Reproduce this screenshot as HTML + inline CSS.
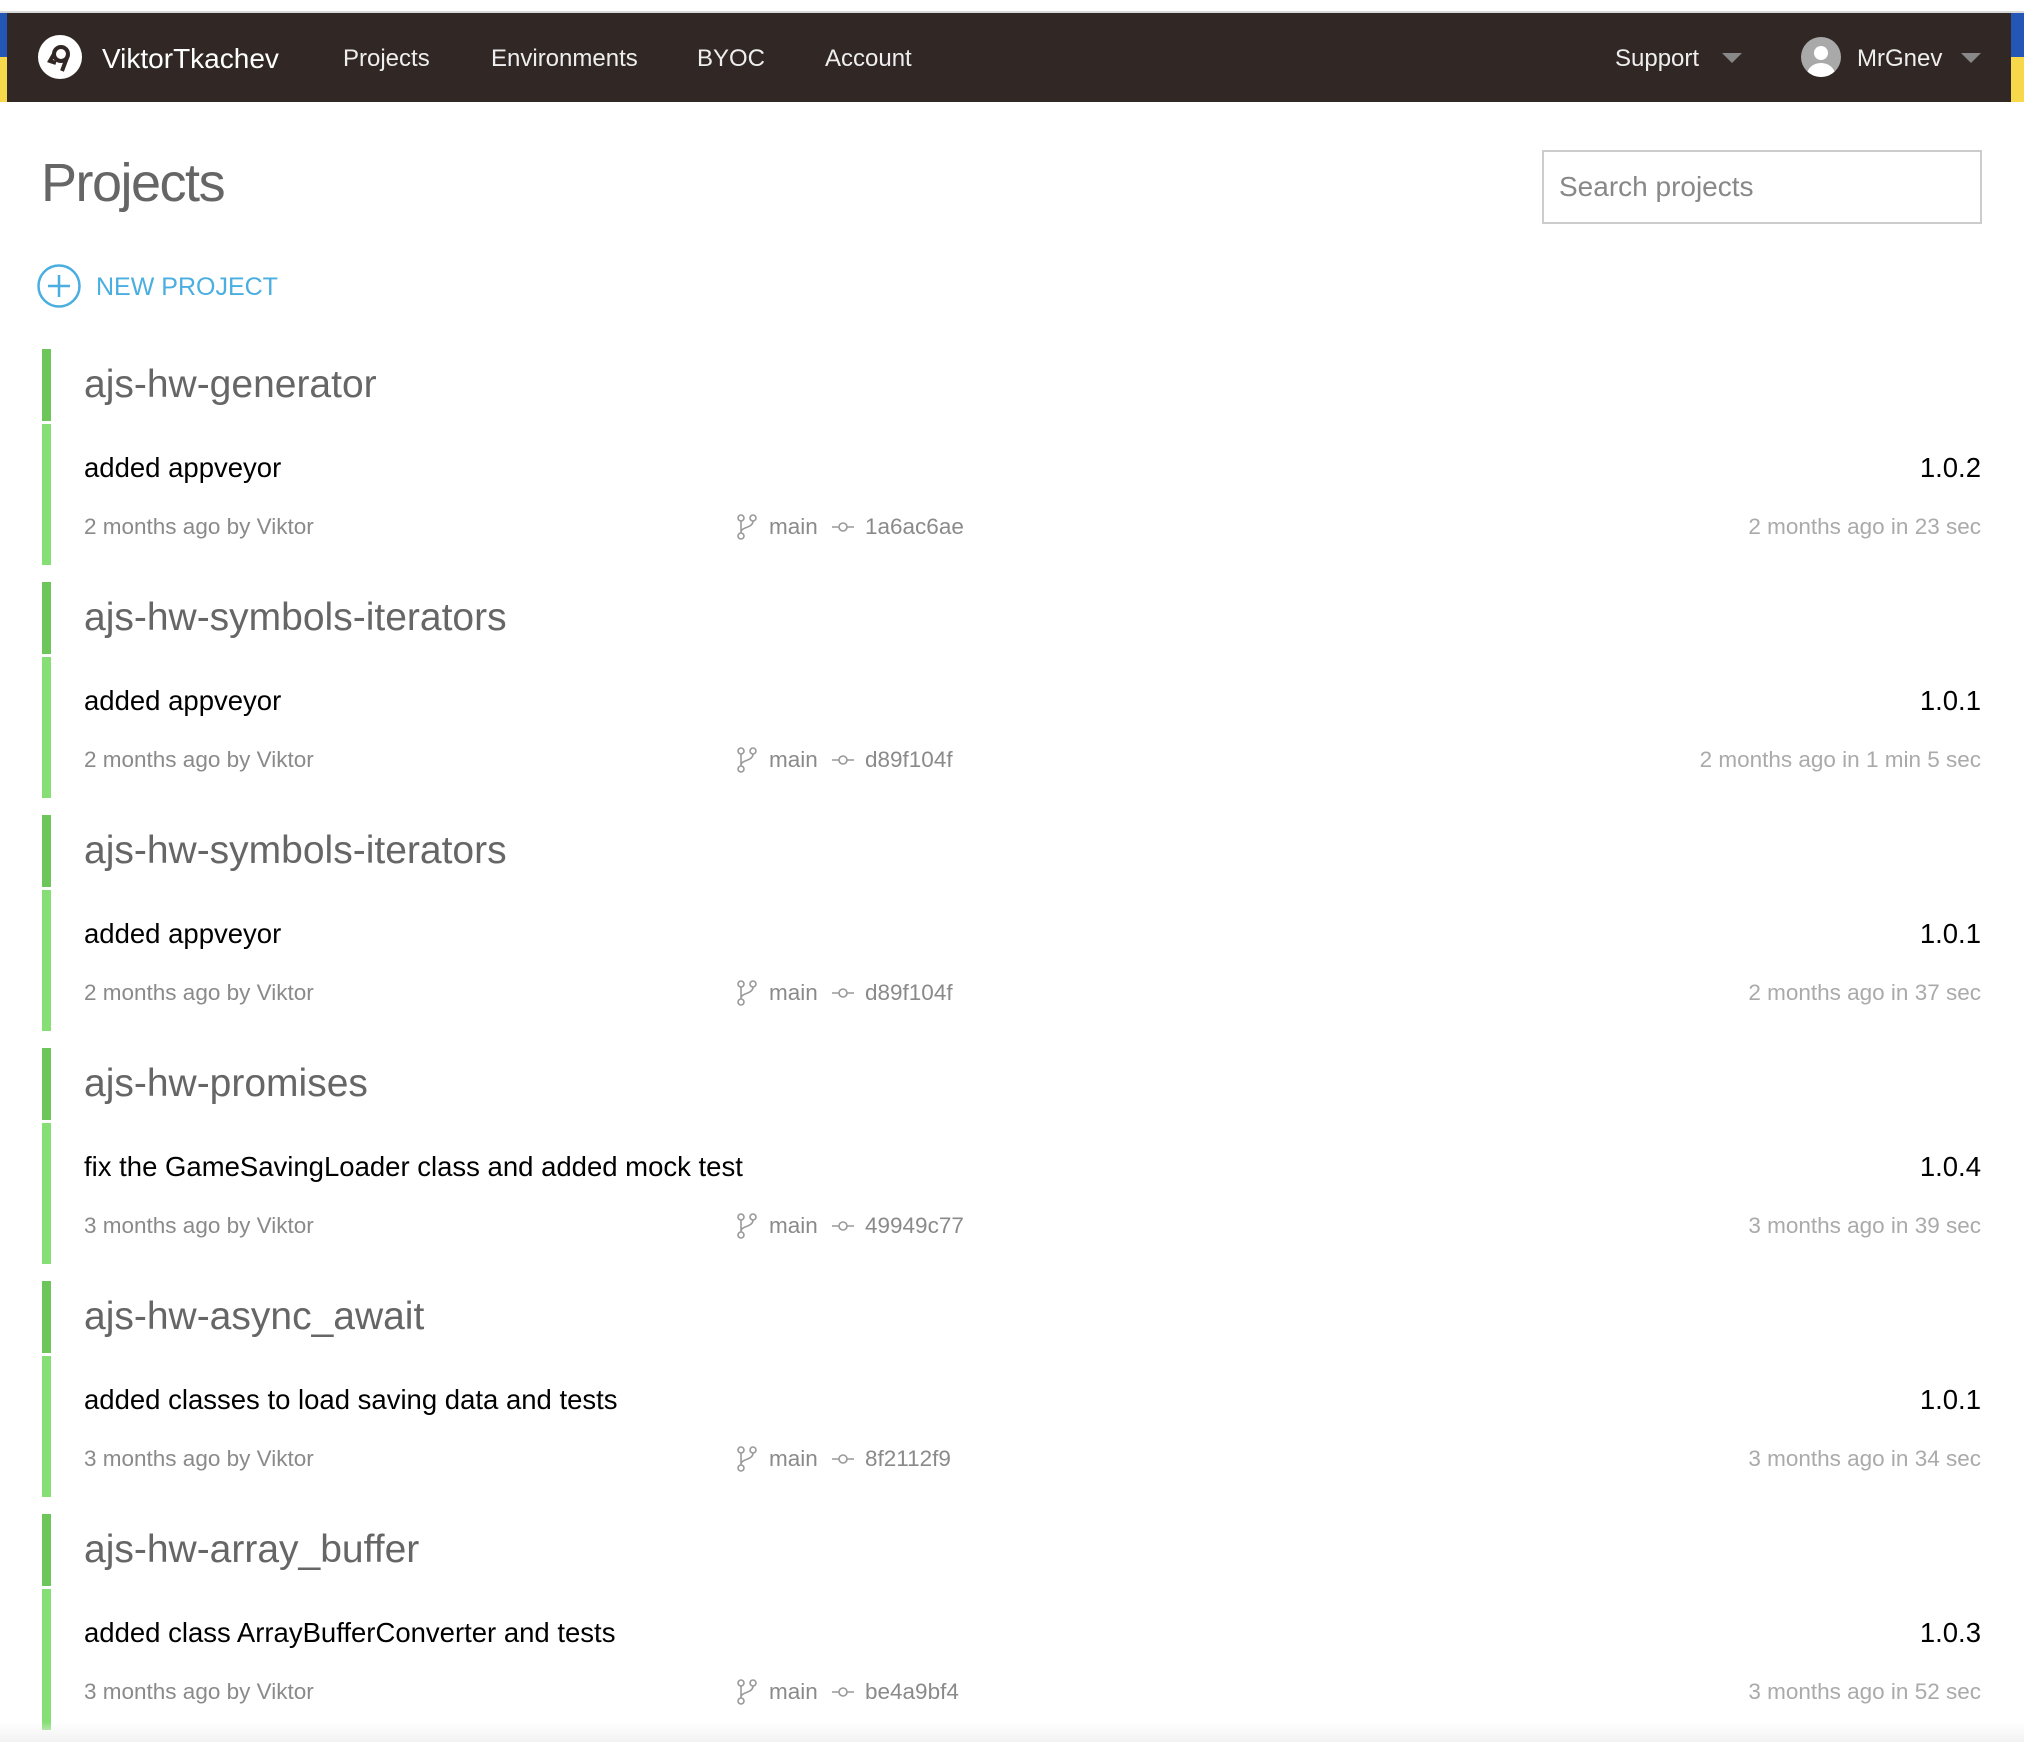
<!DOCTYPE html>
<html><head><meta charset="utf-8"><style>
*{margin:0;padding:0;box-sizing:border-box}
body{width:2024px;height:1742px;background:#fff;font-family:"Liberation Sans",Arial,sans-serif;position:relative;overflow:hidden}
.a{position:absolute;white-space:nowrap}
.nav{position:absolute;left:0;top:11px;width:2024px;height:91px;background:#312826;border-top:2px solid #d8d8d8}
.nl{position:absolute;top:1px;line-height:89px;color:#eee;font-size:24px}
.blk{position:absolute;left:0;width:2024px;height:218px}
.bar1{position:absolute;left:42px;top:0;width:9px;height:72px;background:#6cc65a}
.bar2{position:absolute;left:42px;top:75px;width:9px;height:141px;background:#86df75}
.name{position:absolute;left:84px;top:14px;font-size:39px;color:#666;font-weight:300}
.msg{position:absolute;left:84px;top:103px;font-size:27.5px;color:#000}
.ver{position:absolute;right:43px;top:103px;font-size:27.5px;color:#000}
.meta{position:absolute;top:165px;font-size:22.5px;color:#8a8a8a}
.rm{position:absolute;right:43px;top:165px;font-size:22.5px;color:#aaa}
</style></head><body>
<div class="nav">
 <div style="position:absolute;left:0;top:0;width:7px;height:44px;background:#2456b6"></div>
 <div style="position:absolute;left:0;top:44px;width:7px;height:45px;background:#f7d84a"></div>
 <div style="position:absolute;right:0;top:0;width:13px;height:44px;background:#2456b6"></div>
 <div style="position:absolute;right:0;top:44px;width:13px;height:45px;background:#f7d84a"></div>
 <svg style="position:absolute;left:38px;top:22px" width="44" height="44" viewBox="0 0 44 44"><circle cx="22" cy="22" r="22" fill="#fff"/><circle cx="23" cy="19" r="7" fill="none" stroke="#312826" stroke-width="4"/><path d="M30 20 L24 36 M16 19 L12 26 L18 28" stroke="#312826" stroke-width="4" fill="none"/></svg>
 <div class="nl" style="left:102px;font-size:28px;color:#fff">ViktorTkachev</div>
 <div class="nl" style="left:343px">Projects</div>
 <div class="nl" style="left:491px">Environments</div>
 <div class="nl" style="left:697px">BYOC</div>
 <div class="nl" style="left:825px">Account</div>
 <div class="nl" style="left:1615px">Support</div>
 <div class="a" style="left:1722px;top:40px;width:0;height:0;border-left:10px solid transparent;border-right:10px solid transparent;border-top:10px solid #888"></div>
 <svg style="position:absolute;left:1801px;top:24px" width="40" height="40" viewBox="0 0 40 40"><clipPath id="c"><circle cx="20" cy="20" r="20"/></clipPath><circle cx="20" cy="20" r="20" fill="#a9a9a9"/><g clip-path="url(#c)" fill="#fff"><circle cx="20" cy="16" r="7"/><ellipse cx="20" cy="38" rx="14" ry="12"/></g></svg>
 <div class="nl" style="left:1857px">MrGnev</div>
 <div class="a" style="left:1961px;top:40px;width:0;height:0;border-left:10px solid transparent;border-right:10px solid transparent;border-top:10px solid #888"></div>
</div>
<div class="a" style="left:41px;top:152px;font-size:54px;color:#666;font-weight:300;letter-spacing:-1.5px">Projects</div>
<div class="a" style="left:1542px;top:150px;width:440px;height:74px;border:2px solid #ccc;font-size:28px;color:#888;padding:19px 0 0 15px">Search projects</div>
<svg style="position:absolute;left:37px;top:264px" width="44" height="44" viewBox="0 0 44 44"><circle cx="22" cy="22" r="20.5" fill="none" stroke="#4aaee0" stroke-width="2.5"/><path d="M22 11v22M11 22h22" stroke="#4aaee0" stroke-width="2.5"/></svg>
<div class="a" style="left:96px;top:273px;font-size:25px;color:#4aaee0">NEW PROJECT</div>

<div class="blk" style="top:349px"><div class="bar1"></div><div class="bar2"></div>
<div class="name">ajs-hw-generator</div><div class="msg">added appveyor</div><div class="ver">1.0.2</div>
<div class="meta" style="left:84px">2 months ago by Viktor</div>
<svg class="a" style="left:736px;top:165px" width="22" height="26" viewBox="0 0 22 26"><g fill="none" stroke="#999" stroke-width="1.6"><circle cx="5" cy="4" r="3"/><circle cx="17" cy="4" r="3"/><circle cx="5" cy="22" r="3"/><path d="M5 7v12M17 7c0 7-12 6-12 11"/></g></svg>
<div class="meta" style="left:769px">main</div>
<svg class="a" style="left:832px;top:168px" width="22" height="20" viewBox="0 0 22 20"><g fill="none" stroke="#999" stroke-width="1.6"><circle cx="11" cy="10" r="4"/><path d="M0 10h7M15 10h7"/></g></svg>
<div class="meta" style="left:865px">1a6ac6ae</div>
<div class="rm">2 months ago in 23 sec</div></div>

<div class="blk" style="top:582px"><div class="bar1"></div><div class="bar2"></div>
<div class="name">ajs-hw-symbols-iterators</div><div class="msg">added appveyor</div><div class="ver">1.0.1</div>
<div class="meta" style="left:84px">2 months ago by Viktor</div>
<svg class="a" style="left:736px;top:165px" width="22" height="26" viewBox="0 0 22 26"><g fill="none" stroke="#999" stroke-width="1.6"><circle cx="5" cy="4" r="3"/><circle cx="17" cy="4" r="3"/><circle cx="5" cy="22" r="3"/><path d="M5 7v12M17 7c0 7-12 6-12 11"/></g></svg>
<div class="meta" style="left:769px">main</div>
<svg class="a" style="left:832px;top:168px" width="22" height="20" viewBox="0 0 22 20"><g fill="none" stroke="#999" stroke-width="1.6"><circle cx="11" cy="10" r="4"/><path d="M0 10h7M15 10h7"/></g></svg>
<div class="meta" style="left:865px">d89f104f</div>
<div class="rm">2 months ago in 1 min 5 sec</div></div>

<div class="blk" style="top:815px"><div class="bar1"></div><div class="bar2"></div>
<div class="name">ajs-hw-symbols-iterators</div><div class="msg">added appveyor</div><div class="ver">1.0.1</div>
<div class="meta" style="left:84px">2 months ago by Viktor</div>
<svg class="a" style="left:736px;top:165px" width="22" height="26" viewBox="0 0 22 26"><g fill="none" stroke="#999" stroke-width="1.6"><circle cx="5" cy="4" r="3"/><circle cx="17" cy="4" r="3"/><circle cx="5" cy="22" r="3"/><path d="M5 7v12M17 7c0 7-12 6-12 11"/></g></svg>
<div class="meta" style="left:769px">main</div>
<svg class="a" style="left:832px;top:168px" width="22" height="20" viewBox="0 0 22 20"><g fill="none" stroke="#999" stroke-width="1.6"><circle cx="11" cy="10" r="4"/><path d="M0 10h7M15 10h7"/></g></svg>
<div class="meta" style="left:865px">d89f104f</div>
<div class="rm">2 months ago in 37 sec</div></div>

<div class="blk" style="top:1048px"><div class="bar1"></div><div class="bar2"></div>
<div class="name">ajs-hw-promises</div><div class="msg">fix the GameSavingLoader class and added mock test</div><div class="ver">1.0.4</div>
<div class="meta" style="left:84px">3 months ago by Viktor</div>
<svg class="a" style="left:736px;top:165px" width="22" height="26" viewBox="0 0 22 26"><g fill="none" stroke="#999" stroke-width="1.6"><circle cx="5" cy="4" r="3"/><circle cx="17" cy="4" r="3"/><circle cx="5" cy="22" r="3"/><path d="M5 7v12M17 7c0 7-12 6-12 11"/></g></svg>
<div class="meta" style="left:769px">main</div>
<svg class="a" style="left:832px;top:168px" width="22" height="20" viewBox="0 0 22 20"><g fill="none" stroke="#999" stroke-width="1.6"><circle cx="11" cy="10" r="4"/><path d="M0 10h7M15 10h7"/></g></svg>
<div class="meta" style="left:865px">49949c77</div>
<div class="rm">3 months ago in 39 sec</div></div>

<div class="blk" style="top:1281px"><div class="bar1"></div><div class="bar2"></div>
<div class="name">ajs-hw-async_await</div><div class="msg">added classes to load saving data and tests</div><div class="ver">1.0.1</div>
<div class="meta" style="left:84px">3 months ago by Viktor</div>
<svg class="a" style="left:736px;top:165px" width="22" height="26" viewBox="0 0 22 26"><g fill="none" stroke="#999" stroke-width="1.6"><circle cx="5" cy="4" r="3"/><circle cx="17" cy="4" r="3"/><circle cx="5" cy="22" r="3"/><path d="M5 7v12M17 7c0 7-12 6-12 11"/></g></svg>
<div class="meta" style="left:769px">main</div>
<svg class="a" style="left:832px;top:168px" width="22" height="20" viewBox="0 0 22 20"><g fill="none" stroke="#999" stroke-width="1.6"><circle cx="11" cy="10" r="4"/><path d="M0 10h7M15 10h7"/></g></svg>
<div class="meta" style="left:865px">8f2112f9</div>
<div class="rm">3 months ago in 34 sec</div></div>

<div class="blk" style="top:1514px"><div class="bar1"></div><div class="bar2"></div>
<div class="name">ajs-hw-array_buffer</div><div class="msg">added class ArrayBufferConverter and tests</div><div class="ver">1.0.3</div>
<div class="meta" style="left:84px">3 months ago by Viktor</div>
<svg class="a" style="left:736px;top:165px" width="22" height="26" viewBox="0 0 22 26"><g fill="none" stroke="#999" stroke-width="1.6"><circle cx="5" cy="4" r="3"/><circle cx="17" cy="4" r="3"/><circle cx="5" cy="22" r="3"/><path d="M5 7v12M17 7c0 7-12 6-12 11"/></g></svg>
<div class="meta" style="left:769px">main</div>
<svg class="a" style="left:832px;top:168px" width="22" height="20" viewBox="0 0 22 20"><g fill="none" stroke="#999" stroke-width="1.6"><circle cx="11" cy="10" r="4"/><path d="M0 10h7M15 10h7"/></g></svg>
<div class="meta" style="left:865px">be4a9bf4</div>
<div class="rm">3 months ago in 52 sec</div></div>
<div class="a" style="left:0;top:1722px;width:2024px;height:20px;background:linear-gradient(#fff0,#f2f2f2)"></div>
</body></html>
